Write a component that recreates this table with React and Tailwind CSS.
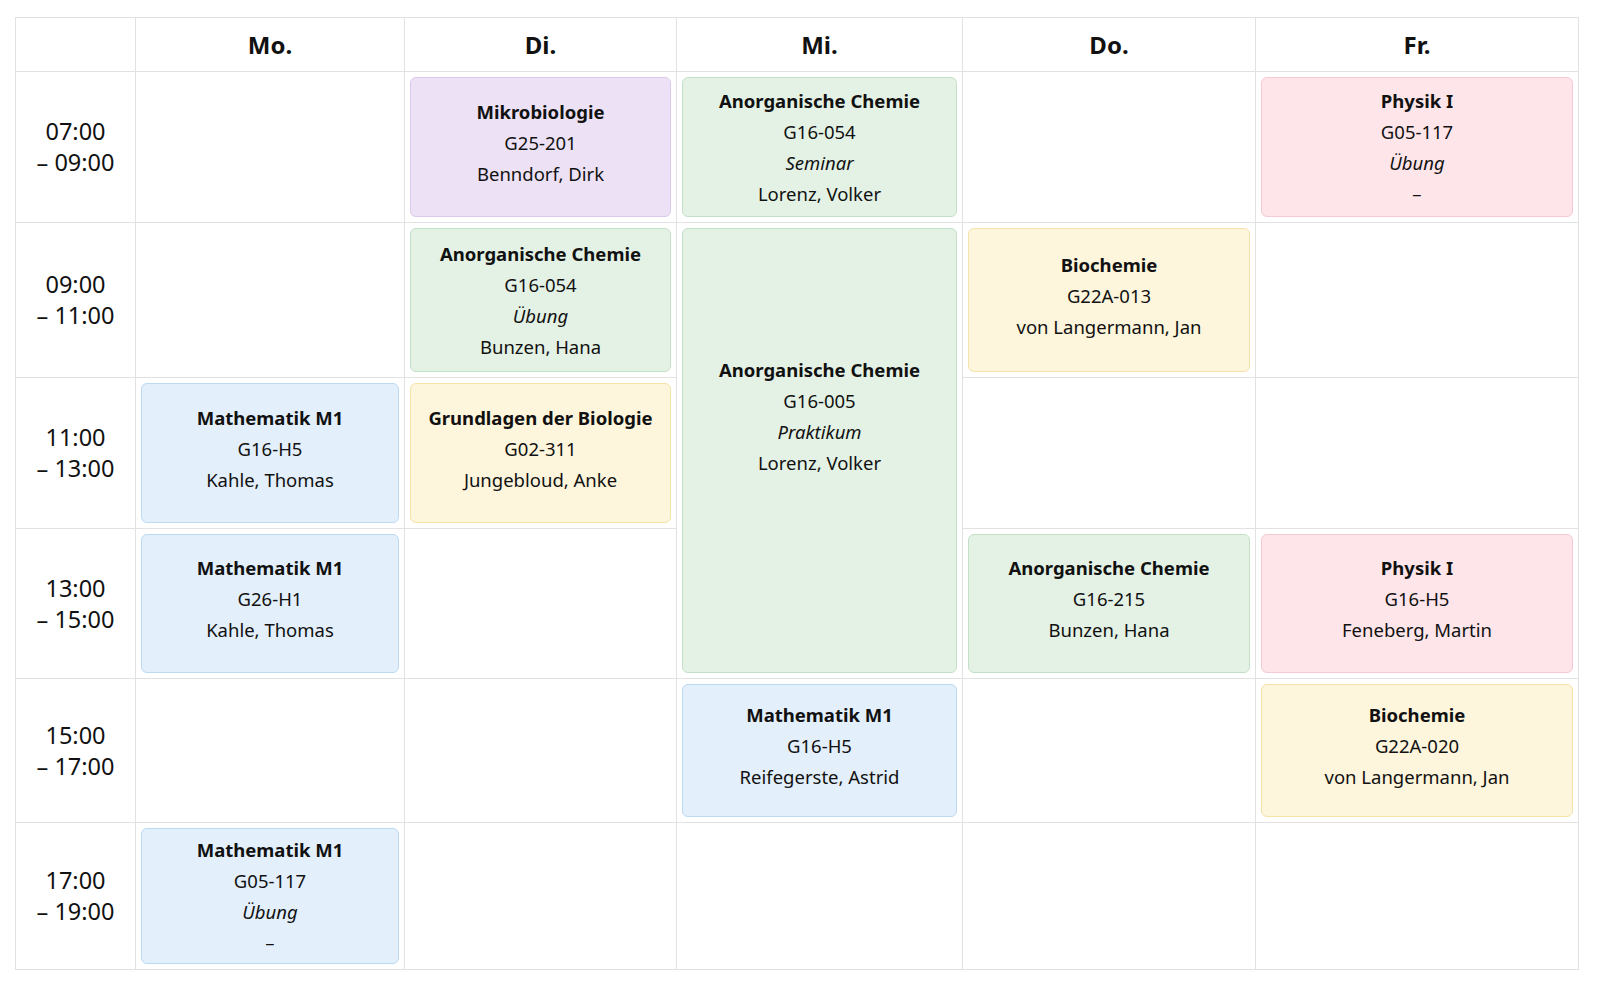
const colors = {
  purple: 'bg-[#ede2f5] border-[#dac9ea]',
  green: 'bg-[#e4f2e5] border-[#c4e1c8]',
  yellow: 'bg-[#fdf5dc] border-[#f5e3a9]',
  blue: 'bg-[#e3effb] border-[#bcd9f3]',
  pink: 'bg-[#fde5e9] border-[#f6c9d3]',
};

const days = ['Mo.', 'Di.', 'Mi.', 'Do.', 'Fr.'];

const slots = [
  { from: '07:00', to: '09:00', h: 'h-[150px]' },
  { from: '09:00', to: '11:00', h: 'h-[154px]' },
  { from: '11:00', to: '13:00', h: 'h-[150px]' },
  { from: '13:00', to: '15:00', h: 'h-[149px]' },
  { from: '15:00', to: '17:00', h: 'h-[143px]' },
  { from: '17:00', to: '19:00', h: 'h-[146px]' },
];

// day index -> slot index -> course
const courses = {
  0: {
    2: { title: 'Mathematik M1', room: 'G16-H5', lecturer: 'Kahle, Thomas', color: 'blue' },
    3: { title: 'Mathematik M1', room: 'G26-H1', lecturer: 'Kahle, Thomas', color: 'blue' },
    5: { title: 'Mathematik M1', room: 'G05-117', type: 'Übung', lecturer: '–', color: 'blue' },
  },
  1: {
    0: { title: 'Mikrobiologie', room: 'G25-201', lecturer: 'Benndorf, Dirk', color: 'purple' },
    1: { title: 'Anorganische Chemie', room: 'G16-054', type: 'Übung', lecturer: 'Bunzen, Hana', color: 'green' },
    2: { title: 'Grundlagen der Biologie', room: 'G02-311', lecturer: 'Jungebloud, Anke', color: 'yellow' },
  },
  2: {
    0: { title: 'Anorganische Chemie', room: 'G16-054', type: 'Seminar', lecturer: 'Lorenz, Volker', color: 'green' },
    1: { title: 'Anorganische Chemie', room: 'G16-005', type: 'Praktikum', lecturer: 'Lorenz, Volker', color: 'green', span: 3 },
    4: { title: 'Mathematik M1', room: 'G16-H5', lecturer: 'Reifegerste, Astrid', color: 'blue' },
  },
  3: {
    1: { title: 'Biochemie', room: 'G22A-013', lecturer: 'von Langermann, Jan', color: 'yellow' },
    3: { title: 'Anorganische Chemie', room: 'G16-215', lecturer: 'Bunzen, Hana', color: 'green' },
  },
  4: {
    0: { title: 'Physik I', room: 'G05-117', type: 'Übung', lecturer: '–', color: 'pink' },
    3: { title: 'Physik I', room: 'G16-H5', lecturer: 'Feneberg, Martin', color: 'pink' },
    4: { title: 'Biochemie', room: 'G22A-020', lecturer: 'von Langermann, Jan', color: 'yellow' },
  },
};

const CourseCard = ({ course }) => {
  const pad = course.span ? 'pb-[70px]' : course.type ? '' : 'pb-[10px]';
  return (
    <div
      className={`flex-1 flex flex-col items-center justify-center rounded-md border text-[18.5px] leading-[31px] text-[#111] ${colors[course.color]} ${pad}`}
    >
      <span className="font-bold">{course.title}</span>
      <span>{course.room}</span>
      {course.type && <span className="italic">{course.type}</span>}
      <span>{course.lecturer}</span>
    </div>
  );
};

const App = () => {
  const cells = [];

  slots.forEach((slot, s) => {
    cells.push(
      <div key={`t${s}`} className={`bg-white flex flex-col items-center justify-center text-[23.5px] leading-[31px] text-[#111] ${slot.h}`}>
        <span>{slot.from}</span>
        <span>– {slot.to}</span>
      </div>
    );
    days.forEach((_, d) => {
      // skip slots covered by a spanning course above
      const above = [1, 2].some((k) => courses[d][s - k]?.span > k);
      if (above) return;
      const course = courses[d][s];
      cells.push(
        <div
          key={`c${d}-${s}`}
          className={`bg-white flex p-[5px] ${course?.span === 3 ? 'row-span-3' : ''}`}
        >
          {course && <CourseCard course={course} />}
        </div>
      );
    });
  });

  return (
    <div className="min-h-screen bg-white pl-[15px] pt-[17px]" style={{ fontFamily: '"Noto Sans", sans-serif' }}>
      <div className="inline-grid grid-cols-[119px_268px_271px_285px_292px_322px] gap-px p-px bg-[#e2e2e2]">
        <div className="bg-white h-[53px]" />
        {days.map((day) => (
          <div key={day} className="bg-white h-[53px] flex items-center justify-center text-[24px] font-bold text-[#111]">
            {day}
          </div>
        ))}
        {cells}
      </div>
    </div>
  );
};

export default App;
